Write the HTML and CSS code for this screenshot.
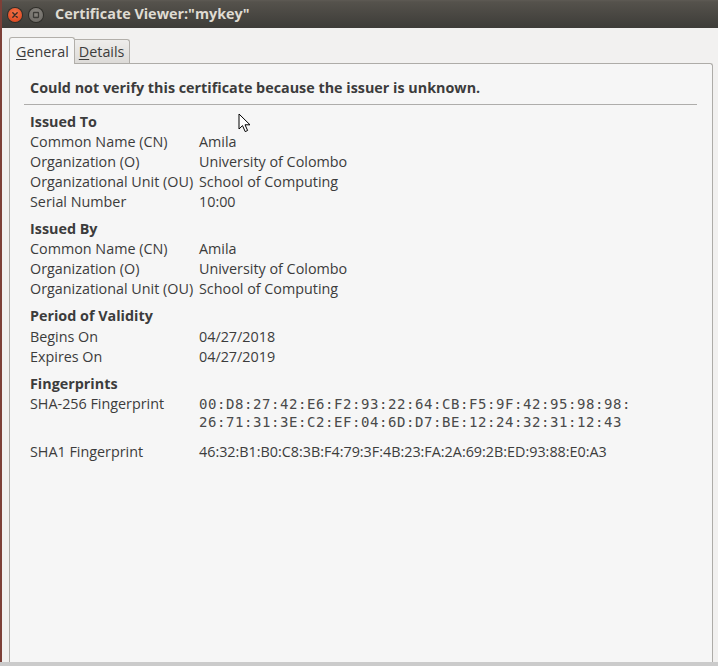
FILE: index.html
```html
<!DOCTYPE html>
<html>
<head>
<meta charset="utf-8">
<link rel="stylesheet" href="styles.css">
</head>
<body>
<div class="window">
  <div class="titlebar">
    <div class="btn close">
      <svg width="14" height="14" viewBox="0 0 14 14"><path d="M4.8 4.8 L9.2 9.2 M9.2 4.8 L4.8 9.2" stroke="#3a2c25" stroke-width="1.4" stroke-linecap="round"/></svg>
    </div>
    <div class="btn max">
      <svg width="14" height="14" viewBox="0 0 14 14"><rect x="4.5" y="4.5" width="5" height="5" rx="0.5" fill="none" stroke="#3c3b37" stroke-width="1.3"/></svg>
    </div>
    <div class="title">Certificate Viewer:"mykey"</div>
  </div>
  <div class="client">
    <div class="tabs">
      <div class="tab active"><span class="mn">G</span>eneral</div>
      <div class="tab"><span class="mn">D</span>etails</div>
    </div>
    <div class="panel">
      <div class="warning">Could not verify this certificate because the issuer is unknown.</div>
      <div class="sep"></div>
      <div class="section">
        <div class="sec-title">Issued To</div>
        <div class="row"><span class="k">Common Name (CN)</span><span class="v">Amila</span></div>
        <div class="row"><span class="k">Organization (O)</span><span class="v">University of Colombo</span></div>
        <div class="row"><span class="k">Organizational Unit (OU)</span><span class="v">School of Computing</span></div>
        <div class="row"><span class="k">Serial Number</span><span class="v">10:00</span></div>
      </div>
      <div class="section">
        <div class="sec-title">Issued By</div>
        <div class="row"><span class="k">Common Name (CN)</span><span class="v">Amila</span></div>
        <div class="row"><span class="k">Organization (O)</span><span class="v">University of Colombo</span></div>
        <div class="row"><span class="k">Organizational Unit (OU)</span><span class="v">School of Computing</span></div>
      </div>
      <div class="section">
        <div class="sec-title period">Period of Validity</div>
        <div class="row"><span class="k">Begins On</span><span class="v">04/27/2018</span></div>
        <div class="row"><span class="k">Expires On</span><span class="v">04/27/2019</span></div>
      </div>
      <div class="section">
        <div class="sec-title">Fingerprints</div>
        <div class="row fp"><span class="k">SHA-256 Fingerprint</span><span class="v mono">00:D8:27:42:E6:F2:93:22:64:CB:F5:9F:42:95:98:98:<br>26:71:31:3E:C2:EF:04:6D:D7:BE:12:24:32:31:12:43</span></div>
        <div class="row"><span class="k">SHA1 Fingerprint</span><span class="v">46:32:B1:B0:C8:3B:F4:79:3F:4B:23:FA:2A:69:2B:ED:93:88:E0:A3</span></div>
      </div>
    </div>
  </div>
</div>
<svg class="cursor" width="14" height="20" viewBox="0 0 14 20"><path d="M1 1 L1 16 L4.5 12.6 L7.2 18.6 L9.6 17.5 L7 11.8 L12 11.8 Z" fill="#fff" stroke="#000" stroke-width="1" stroke-linejoin="round"/></svg>
</body>
</html>
```

FILE: styles.css
```css
html, body {
  margin: 0;
  padding: 0;
}
body {
  width: 718px;
  height: 666px;
  overflow: hidden;
  background: #cbcbcb;
  font-family: "Open Sans", "DejaVu Sans", sans-serif;
  color: #3c3c3c;
  position: relative;
}
.window {
  height: 662px;
  display: flex;
  flex-direction: column;
  border-left: 2px solid #7d4038;
  box-sizing: border-box;
  background: #f2f1f0;
}
.titlebar {
  height: 28px;
  flex: none;
  display: flex;
  align-items: center;
  background: linear-gradient(#5e5a54 0, #55524c 2px, #3d3c38 100%);
  padding-left: 6px;
}
.btn {
  width: 14px;
  height: 14px;
  border-radius: 50%;
  display: flex;
  align-items: center;
  justify-content: center;
  margin-top: 1px;
}
.close {
  background: radial-gradient(circle at 50% 35%, #f4764a 0, #e5532a 60%, #c9421d 100%);
  box-shadow: 0 0 0 1px #2e2d29;
}
.max {
  margin-left: 7px;
  background: radial-gradient(circle at 50% 35%, #8a8781 0, #75726d 60%, #66635e 100%);
  box-shadow: 0 0 0 1px #2e2d29;
}
.title {
  margin-left: 12px;
  color: #dfdbd2;
  font-weight: bold;
  font-size: 14.4px;
  margin-top: -1px;
}
.client {
  flex: 1;
  display: flex;
  flex-direction: column;
  padding: 9px 5px 0 7px;
  min-height: 0;
}
.tabs {
  display: flex;
  align-items: flex-end;
  height: 26px;
}
.tab {
  font-size: 14.35px;
  color: #3c3c3c;
  border: 1px solid #b2afaa;
  border-bottom: none;
  border-left: none;
  height: 23px;
  padding: 0 5px 0 4px;
  display: flex;
  align-items: center;
  background: linear-gradient(#eeedeb, #dddbd8);
  border-radius: 0 3px 0 0;
}
.tab.active {
  border-left: 1px solid #b2afaa;
  height: 26px;
  margin-bottom: -1px;
  background: #f6f6f6;
  border-radius: 3px 3px 0 0;
  padding: 0 5px 0 6px;
  z-index: 1;
  position: relative;
}
.mn {
  text-decoration: underline;
  text-underline-offset: 2px;
}
.panel {
  flex: 1;
  background: #f6f6f6;
  border: 1px solid #aeaca8;
  border-bottom: none;
  border-radius: 0 3px 0 0;
  padding: 14px 15px 0 14px;
}
.warning {
  font-weight: bold;
  font-size: 14.35px;
  line-height: 20px;
  padding-left: 6px;
}
.sep {
  height: 1px;
  background: #aeadab;
  margin: 6px 0 7px;
}
.section {
  padding-left: 6px;
  margin-bottom: 7px;
  font-size: 14.35px;
  line-height: 20px;
}
.sec-title {
  font-weight: bold;
}
.sec-title.period {
  margin-bottom: 1px;
}
.row {
  display: grid;
  grid-template-columns: 169px 1fr;
}
.row.fp {
  margin-bottom: 11px;
}
.mono {
  font-family: "DejaVu Sans Mono", monospace;
  font-size: 14px;
  letter-spacing: 0.57px;
  line-height: 18px;
  padding-top: 1px;
  color: #4a4a4a;
}
.cursor {
  position: absolute;
  left: 238px;
  top: 113px;
}
```
